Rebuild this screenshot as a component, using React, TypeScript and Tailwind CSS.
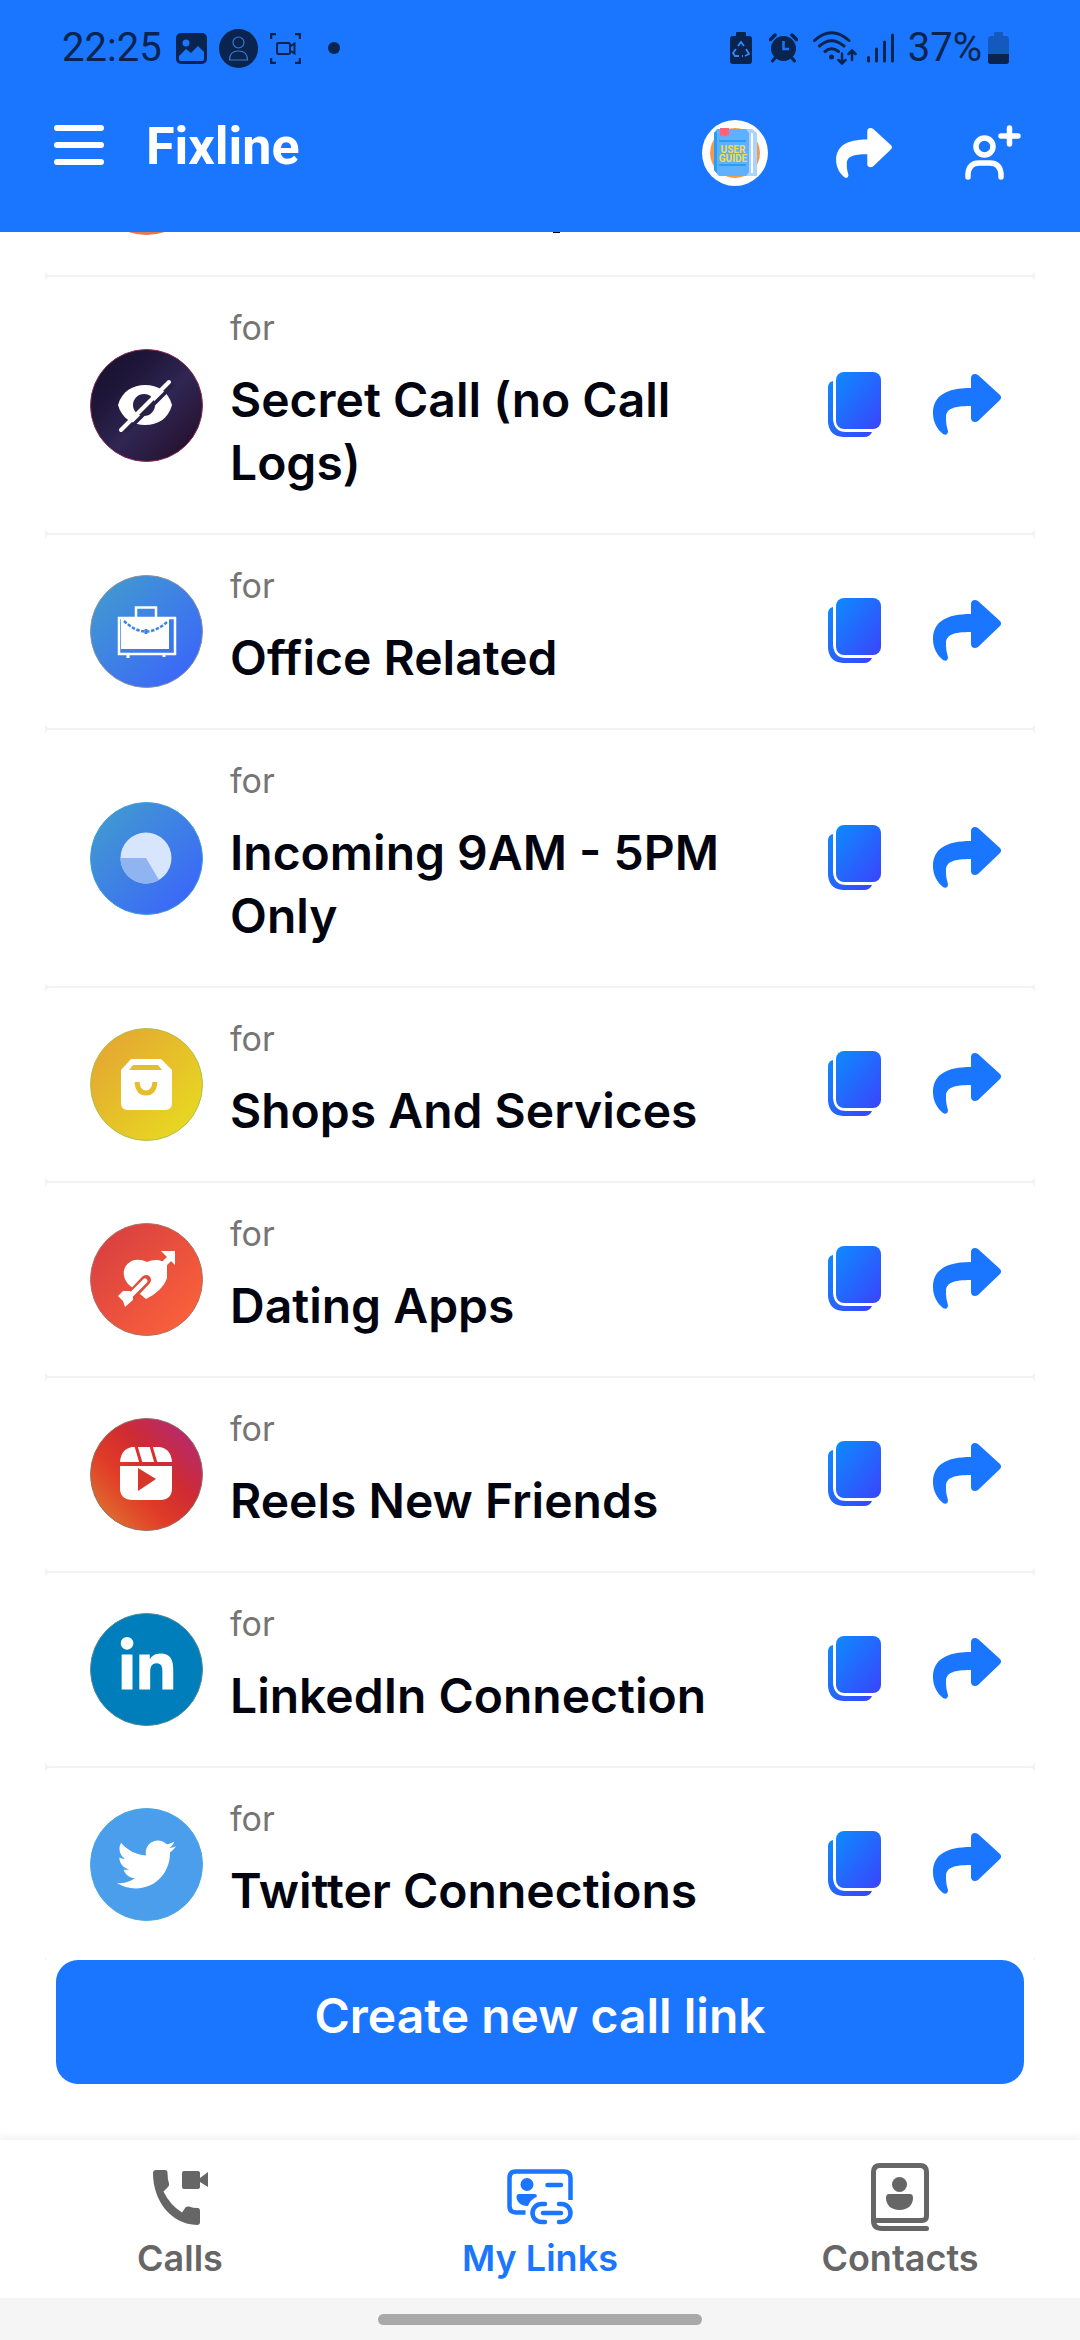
import type { ReactNode } from "react";
import { FaLinkedinIn, FaTwitter } from "react-icons/fa";

type LinkItem = { title: string; from: string; to: string; rim: string; glyph: ReactNode };

const items: LinkItem[] = [
  {
    title: "Secret Call (no Call Logs)",
    from: "#150f2c",
    to: "#220a22",
    rim: "#8a2c50",
    glyph: (
      <>
        <path
          d="M28 56 C32 42 43 36 55 36 C68 36 78 42 82 56 C78 70 68 76 55 76 C43 76 32 70 28 56 Z"
          fill="#fff"
        />
        <circle cx="54" cy="56" r="11" fill="#2a2149" />
        <path d="M36 83 L84 35" stroke="#2a2149" strokeWidth="3.5" />
        <path d="M31 81 L79 33" stroke="#fff" strokeWidth="4" strokeLinecap="round" />
      </>
    ),
  },
  {
    title: "Office Related",
    from: "#429fcc",
    to: "#3a60ff",
    rim: "#8a8f9c",
    glyph: (
      <>
        <path d="M46 42 V32.500 H66 V42" fill="none" stroke="#fff" strokeWidth="2.500" />
        <rect x="29" y="43" width="56" height="36" fill="none" stroke="#fff" strokeWidth="2.500" />
        <path d="M31 44 H79 V74 H31 Z" fill="#fff" />
        <path d="M34 46 Q56 67 78 46" fill="none" stroke="#3f86e2" strokeWidth="2.500" strokeDasharray="3.500 1.500" />
        <path d="M56 54 v5" stroke="#3f86e2" strokeWidth="3" />
        <path d="M38 80 v3 M74 80 v2" stroke="#fff" strokeWidth="3" />
      </>
    ),
  },
  {
    title: "Incoming 9AM - 5PM Only",
    from: "#429fcc",
    to: "#3a60ff",
    rim: "#3f9fd6",
    glyph: (
      <>
        <circle cx="56" cy="56" r="25.500" fill="#d8e6fd" />
        <path d="M56 56 H30.500 A25.500 25.500 0 0 0 69 78 Z" fill="#8fb4f1" />
      </>
    ),
  },
  {
    title: "Shops And Services",
    from: "#e4a035",
    to: "#e8e01e",
    rim: "#a9c24b",
    glyph: (
      <>
        <path d="M41 31 H71 L82 42 V75 Q82 82 75 82 H38 Q31 82 31 75 V42 Z" fill="#fff" />
        <path d="M43 37 H68 L72 42 H39 Z" fill="#e6bd2d" />
        <path d="M47 54 Q48 65 56 65 Q64 65 65 54" fill="none" stroke="#e6bd2d" strokeWidth="5" />
      </>
    ),
  },
  {
    title: "Dating Apps",
    from: "#d43b41",
    to: "#ff663a",
    rim: "#ab7465",
    glyph: (
      <>
        <path
          d="M57 39 C51 36 44 36 40 39 C32 44 32 54 38 61 L56 76 C66 71 74 64 77 55 V42 C73 36 63 36 57 39 Z"
          fill="#fff"
        />
        <path d="M38 76 L56 57" stroke="#e24d3e" strokeWidth="10" strokeLinecap="round" />
        <path d="M38 75 L55 58" stroke="#fff" strokeWidth="5" strokeLinecap="round" />
        <path d="M28 73 L33 68 H40 L43 71 V77 L35 84 L33 78 Z" fill="#fff" />
        <path d="M72 43 L82 33" stroke="#fff" strokeWidth="6" />
        <path d="M71 28 H85 V42 Z" fill="#fff" />
      </>
    ),
  },
  {
    title: "Reels New Friends",
    from: "#e0402a",
    to: "#d43030",
    rim: "#8f7263",
    glyph: (
      <>
        <path d="M30 48 H82 V70 Q82 82 70 82 H43 Q30 82 30 70 Z" fill="#fff" />
        <path d="M30 44 Q31 31 42 29 H70 Q81 31 82 44 Z" fill="#fff" />
        <path d="M46 28 L51 45 M61 28 L66 45" stroke="#d4342d" strokeWidth="3" />
        <path d="M48 50 L66 61 L48 73 Z" fill="#d8362b" />
      </>
    ),
  },
  {
    title: "LinkedIn Connection",
    from: "#007ebb",
    to: "#007ebb",
    rim: "#4f8b93",
    glyph: <FaLinkedinIn x="27" y="24" size={60} color="#fff" />,
  },
  {
    title: "Twitter Connections",
    from: "#4a9eec",
    to: "#4a9eec",
    rim: "#47a9dc",
    glyph: <FaTwitter x="27" y="27" size={59} color="#fff" />,
  },
];

function ShareIcon({ className }: { className: string }) {
  return (
    <svg viewBox="0 0 68 61" className={className} fill="currentColor" aria-hidden="true">
      <path d="M38 14 C13 14 0 22 0 39 C0 48 4 55 10 60 C13 62 15 60 15 57 C13 50 13 47 13 42 C14 35 20 32 38 32 V44 C38 48 42 49 45 47 L67 26 C68.500 24 68.500 23 67 21 L45 1 C42 -1 38 0 38 4 Z" />
    </svg>
  );
}

function CopyIcon() {
  return (
    <svg viewBox="0 0 53 65" className="h-[65px] w-[53px]" aria-hidden="true">
      <defs>
        <linearGradient id="copy" x1="0" y1="0" x2="1" y2="1">
          <stop offset="0" stopColor="#0d8bff" />
          <stop offset="1" stopColor="#3a44fb" />
        </linearGradient>
      </defs>
      <rect x="8" width="45" height="57" rx="8" fill="url(#copy)" />
      <path d="M5 9 C1 10 0 13 0 16 V50 Q1 64 15 65 H36 Q42 65 44 60 H18 Q6 60 5 47 Z" fill="url(#copy)" />
    </svg>
  );
}

function Avatar({ item, id }: { item: LinkItem; id: string }) {
  return (
    <svg viewBox="0 0 113 113" className="size-[113px] shrink-0" aria-hidden="true">
      <defs>
        <linearGradient id={id} x1="0" y1="0" x2="1" y2="1">
          <stop offset="0" stopColor={item.from} />
          {id === "a0" && <stop offset="0.300" stopColor="#1f1739" />}
          {id === "a0" && <stop offset="0.550" stopColor="#2f2653" />}
          <stop offset="1" stopColor={item.to} />
        </linearGradient>
        <linearGradient id="reels" x1="0.150" y1="0.850" x2="0.850" y2="0.150">
          <stop offset="0" stopColor="#df672f" />
          <stop offset="0.300" stopColor="#e13d27" />
          <stop offset="0.650" stopColor="#cf2b32" />
          <stop offset="1" stopColor="#b92a68" />
        </linearGradient>
      </defs>
      <circle
        cx="56.500"
        cy="56.500"
        r="56"
        fill={id === "a5" ? "url(#reels)" : `url(#${id})`}
        stroke={item.rim}
        strokeWidth="1"
      />
      {item.glyph}
    </svg>
  );
}

function Row({ item, index }: { item: LinkItem; index: number }) {
  return (
    <li className="flex items-center rounded-[5px] bg-white pt-[29px] pr-[34px] pb-[39px] pl-[45px]">
      <div className="flex h-0 items-center">
        <div className="mt-[10px]">
          <Avatar item={item} id={`a${index}`} />
        </div>
      </div>
      <div className="ml-[27px] flex-1 pr-[60px]">
        <p className="text-[34px] leading-[44px] text-[#757575]">for</p>
        <h2 className="mt-[18px] text-[48px] leading-[63px] font-semibold text-[#02050f]">{item.title}</h2>
      </div>
      <div className="mt-[8px] flex h-0 items-center gap-[52px]">
        <button type="button" aria-label={`Copy ${item.title} link`}>
          <CopyIcon />
        </button>
        <button type="button" aria-label={`Share ${item.title} link`} className="text-[#1a75ff]">
          <ShareIcon className="h-[61px] w-[68px]" />
        </button>
      </div>
    </li>
  );
}

function StatusBar() {
  return (
    <div className="flex h-24 items-center pr-[71px] pl-[62px] text-[40px] leading-none text-[#08244f]">
      <span>22:25</span>
      <svg viewBox="0 0 31 31" className="ml-[14px] size-[31px]" aria-hidden="true">
        <rect width="31" height="31" rx="5" fill="currentColor" />
        <circle cx="10" cy="10" r="3.500" fill="#1a75ff" />
        <path d="M3 23 L10 16 L15 20 L22 13 L28 19 V26 Q28 28 26 28 H5 Q3 28 3 26 Z" fill="#1a75ff" />
      </svg>
      <svg viewBox="0 0 39 39" className="ml-3 size-[39px]" aria-hidden="true">
        <circle cx="19.500" cy="19.500" r="19.500" fill="currentColor" />
        <g fill="none" stroke="#3d78d0" strokeWidth="1.200">
          <circle cx="19.500" cy="13.500" r="5.500" />
          <path d="M10.500 31 Q10.500 22 19.500 22 Q28.500 22 28.500 31 Z" />
        </g>
      </svg>
      <svg viewBox="0 0 31 31" className="ml-3 size-[31px]" fill="none" stroke="currentColor" aria-hidden="true">
        <path d="M1 6 V1 H6 M25 1 H30 V6 M30 25 V30 H25 M6 30 H1 V25" strokeWidth="2.500" />
        <rect x="7" y="10" width="13" height="11" rx="1.500" strokeWidth="2" />
        <path d="M20 13.500 L24.500 10.500 V20.500 L20 17.500" strokeWidth="2" />
      </svg>
      <span className="ml-[27px] size-3 rounded-full bg-[#08244f]" />

      <div className="ml-auto flex items-center">
        <svg viewBox="0 0 22 32" className="h-8 w-[22px]" aria-hidden="true">
          <path d="M6 4 V1 Q6 0 7 0 H15 Q16 0 16 1 V4 H19 Q22 4 22 7 V29 Q22 32 19 32 H3 Q0 32 0 29 V7 Q0 4 3 4 Z" fill="currentColor" />
          <path d="M8 14 L11 10 L14 14 M16 17 L19 22 L15 24 M13 24 H12 M9 24 H5 L3 21 L6 17" fill="none" stroke="#3487ff" strokeWidth="1.800" />
        </svg>
        <svg viewBox="0 0 29 30" className="ml-[17px] h-[30px] w-[29px]" fill="none" stroke="currentColor" aria-hidden="true">
          <circle cx="14.500" cy="15.500" r="12.500" fill="currentColor" stroke="none" />
          <path d="M1.500 6.500 L6 2 M27.500 6.500 L23 2" strokeWidth="3.500" strokeLinecap="round" />
          <path d="M6 25 L3.500 28 M23 25 L25.500 28" strokeWidth="3" strokeLinecap="round" />
          <path d="M14.500 8 V16 H20" stroke="#1a75ff" strokeWidth="2.500" />
        </svg>
        <svg viewBox="0 0 44 34" className="ml-[15px] h-[34px] w-11" fill="none" stroke="currentColor" strokeWidth="3" strokeLinecap="round" aria-hidden="true">
          <path d="M1.500 9.500 Q18.500 -6 36 9.500 M6.500 15 Q18.500 4.500 31 15 M12 20.500 Q18.500 15 25.500 20.500" />
          <circle cx="18.500" cy="26" r="2.500" fill="currentColor" stroke="none" />
          <path d="M29 22.500 V32 M25.500 29 L29 32.500 L32.500 29 M39 29 V20 M35.500 23 L39 19.500 L42.500 23" strokeWidth="2.500" />
        </svg>
        <svg viewBox="0 0 27 30" className="ml-[10px] h-[30px] w-[27px]" stroke="currentColor" strokeWidth="3" strokeLinecap="round" aria-hidden="true">
          <path d="M1.500 24.500 V28 M9.500 16 V28 M17.500 9 V28 M25.500 2 V28" />
        </svg>
        <span className="ml-[14px]">37%</span>
        <svg viewBox="0 0 21 32" className="ml-[6px] h-8 w-[21px]" aria-hidden="true">
          <path d="M6 4 V1 Q6 0 7 0 H14 Q15 0 15 1 V4 H18 Q21 4 21 7 V29 Q21 32 18 32 H3 Q0 32 0 29 V7 Q0 4 3 4 Z" fill="#1559bf" />
          <path d="M0 22 H21 V29 Q21 32 18 32 H3 Q0 32 0 29 Z" fill="currentColor" />
        </svg>
      </div>
    </div>
  );
}

function GuideIcon() {
  return (
    <svg viewBox="0 0 66 66" className="size-[66px]" aria-hidden="true">
      <circle cx="33" cy="33" r="33" fill="#fff" />
      <circle cx="33" cy="33" r="25" fill="#f59a4c" />
      <path d="M17 9 H50 L55 13 V56 H17 L12 50 V13 Z" fill="#a9d4ff" />
      <path d="M15 9 H44 L47 13 V52 L44 56 H17 L12 50 V13 Z" fill="#5fb0ff" />
      <path d="M12 13 L15 11 V53 L12 50 Z M17 20 H44 V22 H17 Z M17 44 H44 V46 H17 Z" fill="#2a9dfa" />
      <path d="M50 13 V53" stroke="#fff" strokeWidth="2" />
      <path d="M18 8 H27 V16 L25 15 L23 17 L21 15 L18 16 Z" fill="#ff6470" />
      <g fill="#f5dc45" fontFamily="Roboto, sans-serif" fontWeight="700" fontSize="10" textAnchor="middle">
        <text x="31" y="33">USER</text>
        <text x="31" y="42">GUIDE</text>
      </g>
    </svg>
  );
}

function CallsIcon() {
  return (
    <svg viewBox="0 0 55 55" className="size-[55px]" fill="currentColor" aria-hidden="true">
      <path d="M3 0 H12 Q14.500 0 14.500 3 Q14.500 9 16 13.500 Q16.500 15.500 15 17 L10.500 21.500 Q17 35 29 42.500 L32.500 37.500 Q34 36 36 36.500 Q40 38 44.500 38 Q47 38 47 41 V52 Q47 55 44 55 C18 54 0 31 0 3 Q0 0 3 0 Z" />
      <path d="M31 1 H45 Q47 1 47 3 V8 L55 2 V17 L47 12 V17 Q47 19 45 19 H31 Q29 19 29 17 V3 Q29 1 31 1 Z" />
    </svg>
  );
}

function LinksIcon() {
  return (
    <svg viewBox="0 0 66 56" className="h-[56px] w-[66px]" fill="none" stroke="currentColor" strokeWidth="4.500" aria-hidden="true">
      <path d="M18.500 43.500 H9 Q2.500 43.500 2.500 37 V9 Q2.500 2.500 9 2.500 H57 Q63.500 2.500 63.500 9 V31" />
      <circle cx="20" cy="15.500" r="6.500" fill="currentColor" stroke="none" />
      <path d="M12 25 H28 Q30 25 30 27.500 Q23 31 21 37 C13 37 9.500 32 9.500 28 Q9.500 25 12 25 Z" fill="currentColor" stroke="none" />
      <g strokeLinecap="round">
        <path d="M40.500 16 H54 M36 44 H54 M38 35 H34.500 A9 9 0 0 0 34.500 53 H38 M52 35 H54.500 A9 9 0 0 1 54.500 53 H52" />
      </g>
    </svg>
  );
}

function ContactsIcon() {
  return (
    <svg viewBox="0 0 58 68" className="h-[68px] w-[58px]" fill="none" stroke="currentColor" strokeWidth="5" aria-hidden="true">
      <path d="M2.500 57.500 V9 Q2.500 2.500 9 2.500 H49 Q55.500 2.500 55.500 9 V53 Q55.500 57.500 51 57.500 H2.500 Q2.500 65.500 11 65.500 H55.500" strokeLinecap="round" />
      <circle cx="28.500" cy="21.500" r="7.500" fill="currentColor" stroke="none" />
      <path d="M18 31 H39 Q42 31 42 35 C42 42 37 47 28.500 47 C20 47 15 42 15 35 Q15 31 18 31 Z" fill="currentColor" stroke="none" />
    </svg>
  );
}

const tabs = [
  { label: "Calls", icon: <CallsIcon />, active: false },
  { label: "My Links", icon: <LinksIcon />, active: true },
  { label: "Contacts", icon: <ContactsIcon />, active: false },
];

export default function App() {
  return (
    <div className="flex h-screen flex-col bg-white font-['Inter',sans-serif]">
      <header className="shrink-0 bg-[#1a75ff] pb-[38px] font-['Roboto',sans-serif]">
        <StatusBar />
        <div className="flex h-[98px] items-center pr-[59px] pl-[54px] text-white">
          <button type="button" aria-label="Open menu" className="flex w-[50px] flex-col gap-[11px]">
            <span className="h-[6px] rounded-full bg-white" />
            <span className="h-[6px] rounded-full bg-white" />
            <span className="h-[6px] rounded-full bg-white" />
          </button>
          <h1 className="mt-1 ml-[42px] text-[52px] leading-[60px] font-bold">Fixline</h1>
          <div className="mt-4 ml-auto flex items-center">
            <button type="button" aria-label="User guide">
              <GuideIcon />
            </button>
            <button type="button" aria-label="Share" className="ml-[68px]">
              <ShareIcon className="h-[50px] w-[56px]" />
            </button>
            <button type="button" aria-label="Add contact" className="ml-[73px]">
              <svg viewBox="0 0 56 56" className="size-[56px]" fill="none" stroke="currentColor" strokeWidth="5.500" strokeLinecap="round" aria-hidden="true">
                <circle cx="19.500" cy="21.500" r="8.500" />
                <path d="M3 52 V49 Q4 38 14 38 H25 Q35 38 36 49 V52 M44.500 3 V19 M36 11 H53" />
              </svg>
            </button>
          </div>
        </div>
      </header>

      <main className="min-h-0 flex-1 overflow-hidden px-[45px]">
        <div className="flex flex-col gap-[2px] bg-[#f3f3f3]">
          <div className="flex h-[43px] items-start overflow-hidden rounded-b-[5px] bg-white pl-[45px]">
            <div className="flex h-[3px] w-[113px] items-end overflow-hidden">
              <span className="size-[113px] shrink-0 rounded-full bg-[#e2784b]" />
            </div>
            <span className="ml-[350px] h-px w-[7px] bg-[#02050f]" />
          </div>
          <ul className="flex flex-col gap-[2px]">
            {items.map((item, index) => (
              <Row key={item.title} item={item} index={index} />
            ))}
          </ul>
        </div>
      </main>

      <div className="shrink-0 px-14 pb-14">
        <button
          type="button"
          className="block w-full rounded-[22px] bg-[#1a75ff] pt-[26px] pb-[38px] text-center text-[48px] leading-[60px] font-semibold text-white"
        >
          Create new call link
        </button>
      </div>

      <nav className="grid shrink-0 grid-cols-3 bg-white pb-[18px] shadow-[0_-2px_8px_rgba(0,0,0,0.07)]">
        {tabs.map((tab) => (
          <a
            key={tab.label}
            href="#"
            aria-current={tab.active ? "page" : undefined}
            className={
              tab.active
                ? "flex flex-col items-center text-[#1a75ff]"
                : "flex flex-col items-center text-[#666666]"
            }
          >
            <span className="flex h-[96px] items-center pt-[18px]">{tab.icon}</span>
            <span className="text-[36px] leading-[44px] font-semibold">{tab.label}</span>
          </a>
        ))}
      </nav>
      <div className="flex shrink-0 justify-center bg-[#f5f5f5] pt-4 pb-[15px]">
        <span className="h-[11px] w-[30%] rounded-full bg-[#a9a9a9]" />
      </div>
    </div>
  );
}
